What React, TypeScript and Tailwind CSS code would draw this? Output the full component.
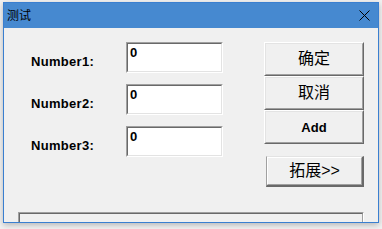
export default function App() {
  const rows = ["Number1:", "Number2:", "Number3:"];

  return (
    <div className="h-[229px] w-[382px] overflow-hidden bg-[#f2f2f2] pl-[3px] pt-[2px] font-['Liberation_Sans','Noto_Sans_CJK_SC',sans-serif]">
      <div className="flex h-[221px] w-[376px] flex-col border border-[#3a7fd0] bg-[#f0f0f0] shadow-[0_2px_6px_rgba(0,0,0,0.25)]">
        {/* title bar */}
        <div className="flex h-[25px] shrink-0 items-center justify-between bg-[#4689d0] pl-[3px] pr-[8px]">
          <span className="text-[12px] leading-[14px] text-black">测试</span>
          <svg width="11" height="11" viewBox="0 0 11 11" className="text-black">
            <path d="M0.5 0.5 L10.5 10.5 M10.5 0.5 L0.5 10.5" stroke="currentColor" strokeWidth="1" fill="none" />
          </svg>
        </div>

        {/* client area */}
        <div className="flex flex-1 flex-col overflow-hidden">
          <div className="flex pt-[14px]">
            {/* fields */}
            <div className="flex flex-col gap-[11px] pl-[27px]">
              {rows.map((r) => (
                <div key={r} className="flex items-start">
                  <span className="w-[95px] pt-[12px] text-[13px] font-bold leading-[16px] tracking-[0.3px] text-black">{r}</span>
                  <div className="h-[31px] w-[97px] border-t border-l border-t-[#a0a0a0] border-l-[#a0a0a0] border-b border-r border-b-white border-r-white">
                    <div className="h-full w-full border-t border-l border-t-[#696969] border-l-[#696969] border-b border-r border-b-[#e3e3e3] border-r-[#e3e3e3] bg-white px-[2px] pt-[2px] text-[13px] font-bold leading-[14px] text-black">
                      0
                    </div>
                  </div>
                </div>
              ))}
            </div>

            {/* buttons */}
            <div className="ml-[41px] flex flex-col">
              {["确定", "取消"].map((t) => (
                <Btn key={t} className="h-[34px] w-[100px] text-[16px]">
                  {t}
                </Btn>
              ))}
              <Btn className="h-[34px] w-[100px] text-[13px] font-bold">Add</Btn>
              <div className="ml-[2px] mt-[12px] h-[31px] w-[98px] border-t border-l border-t-[#e3e3e3] border-l-[#a0a0a0] border-b-2 border-r-2 border-b-[#696969] border-r-[#696969]">
                <div className="flex h-full w-full items-center justify-center border-t border-l border-t-white border-l-white border-b border-r border-b-[#a0a0a0] border-r-[#a0a0a0] bg-[#f0f0f0] text-[16px] leading-none text-black">
                  拓展&gt;&gt;
                </div>
              </div>
            </div>
          </div>

          {/* group box */}
          <div className="ml-[14px] mt-[25px] h-[30px] w-[346px] shrink-0 border-t border-l border-t-[#a0a0a0] border-l-[#a0a0a0] border-r border-r-white">
            <div className="h-full w-full border-t border-l border-t-[#696969] border-l-[#696969] border-r border-r-[#a0a0a0]" />
          </div>
        </div>
      </div>
    </div>
  );
}

function Btn({ children, className }: { children: React.ReactNode; className: string }) {
  return (
    <div className={`border-t border-l border-t-white border-l-white border-b border-r border-b-[#696969] border-r-[#696969] ${className}`}>
      <div className="flex h-full w-full items-center justify-center border-t border-l border-t-[#e3e3e3] border-l-[#e3e3e3] border-b border-r border-b-[#a0a0a0] border-r-[#a0a0a0] bg-[#f0f0f0] leading-none text-black">
        {children}
      </div>
    </div>
  );
}
